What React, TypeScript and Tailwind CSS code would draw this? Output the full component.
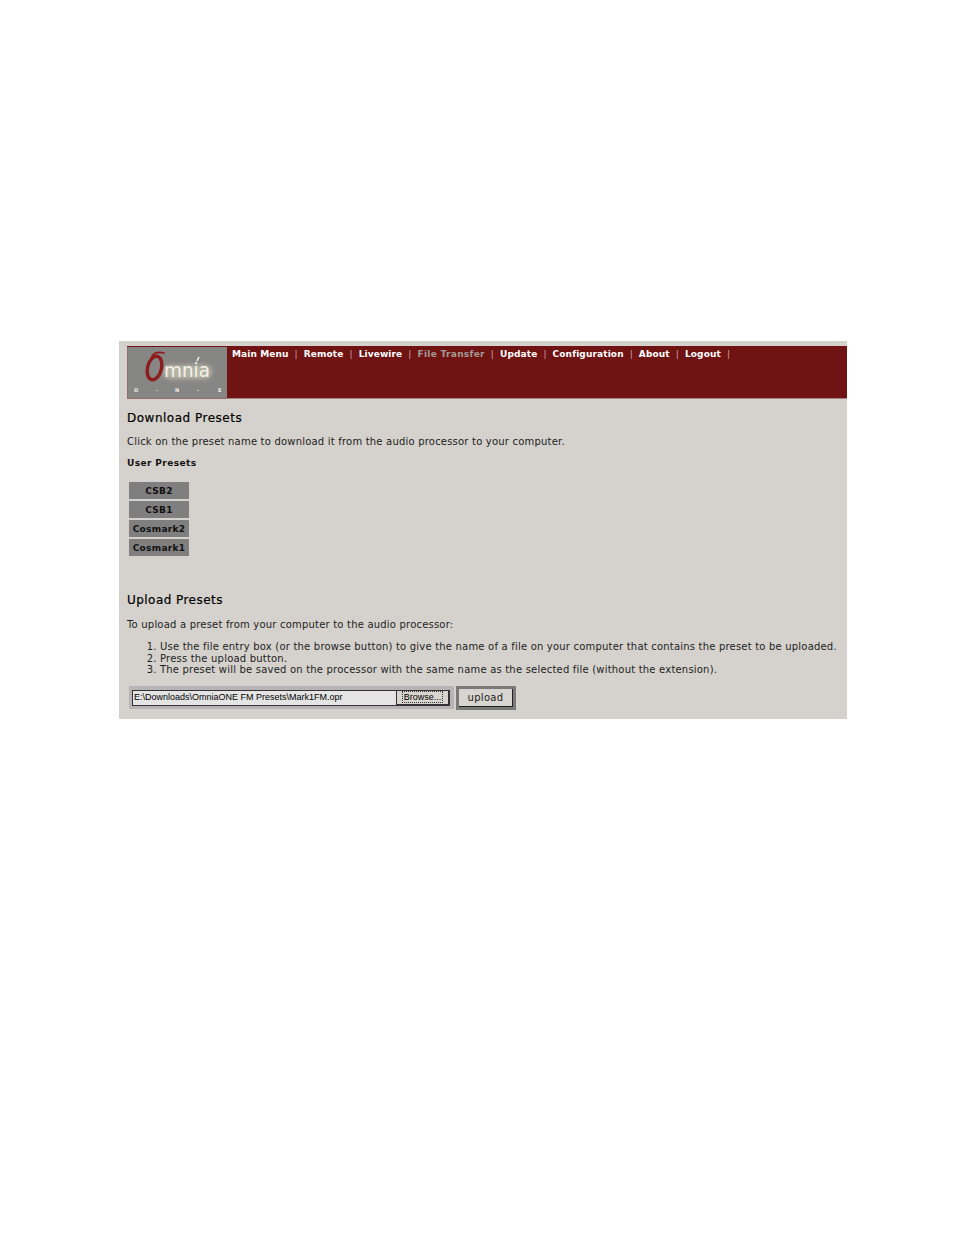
import React from 'react';

const navItems = ['Main Menu', 'Remote', 'Livewire', 'File Transfer', 'Update', 'Configuration', 'About', 'Logout'];
const presets = ['CSB2', 'CSB1', 'Cosmark2', 'Cosmark1'];
const steps = [
  'Use the file entry box (or the browse button) to give the name of a file on your computer that contains the preset to be uploaded.',
  'Press the upload button.',
  'The preset will be saved on the processor with the same name as the selected file (without the extension).',
];

const OmniaLogo = () => (
  <svg width="100" height="52" viewBox="0 0 100 52" className="block shrink-0">
    <defs>
      <filter id="glow" x="-30%" y="-30%" width="160%" height="160%">
        <feGaussianBlur stdDeviation="2.2" />
      </filter>
    </defs>
    <rect width="100" height="52" fill="#868684" />
    <rect x="0" y="0" width="1" height="52" fill="#9a6a6a" />
    <rect x="0" y="51" width="100" height="1" fill="#9a6a6a" />
    <rect x="36" y="18" width="49" height="14" rx="7" fill="#b5b3a6" filter="url(#glow)" />
    <ellipse cx="27.5" cy="21" rx="7" ry="12" transform="rotate(14 27.5 21)" fill="none" stroke="#8d1c1c" strokeWidth="3.4" />
    <path d="M25 9 C28 5 33 5 37 6" fill="none" stroke="#8d1c1c" strokeWidth="1.8" strokeLinecap="round" />
    <text x="37" y="30" fontFamily="'DejaVu Sans', sans-serif" fontSize="19" fill="#f4f2e8" textLength="46" lengthAdjust="spacingAndGlyphs">
      mnia
    </text>
    <path d="M70 14 L72 10" stroke="#f0f0f0" strokeWidth="1.6" />
    <text y="45" fontFamily="'DejaVu Sans', sans-serif" fontSize="5" fontWeight="700" fill="#f1efe6">
      <tspan x="7">O</tspan>
      <tspan x="29">-</tspan>
      <tspan x="48">N</tspan>
      <tspan x="70">-</tspan>
      <tspan x="91">E</tspan>
    </text>
  </svg>
);

export default function App() {
  return (
    <div className="min-h-[1235px] bg-white pl-[119px] pt-[341px] font-['DejaVu_Sans',sans-serif] text-black">
      <div className="h-[378px] w-[728px] bg-[#d5d2cd] pl-2 pt-[5px]">
        {/* Header */}
        <div className="flex h-[53px] items-start border-b border-[#a88585] border-t-[1px] border-t-[#701212] bg-[#701313]">
          <OmniaLogo />
          <div className="flex items-center pl-[5px] pt-[1px] text-[9px] font-bold leading-[12px] tracking-[0.12px] text-white">
            {navItems.map((item) => (
              <React.Fragment key={item}>
                <span className={item === 'File Transfer' ? 'tracking-[0.3px] text-[#a39a96]' : ''}>{item}</span>
                <span className="mx-[6px] font-normal text-[#c9a9a9]">|</span>
              </React.Fragment>
            ))}
          </div>
        </div>

        <h2 className="mt-[12px] text-[12px] font-normal leading-[14px] tracking-[0.5px] [-webkit-text-stroke:0.2px_black]">Download Presets</h2>
        <p className="mt-[11px] text-[10px] leading-[12px] tracking-[0.2px] text-[#222]">
          Click on the preset name to download it from the audio processor to your computer.
        </p>
        <p className="mt-[9px] text-[9px] font-bold leading-[12px] tracking-[0.4px] text-[#111]">User Presets</p>

        <div className="ml-[2px] mt-[13px] flex w-[60px] flex-col gap-[2px]">
          {presets.map((preset) => (
            <div
              key={preset}
              className="flex h-[17px] w-[60px] items-center justify-center bg-[#7f7f7f] pt-[2px] text-[9px] font-bold leading-none tracking-[0.3px] text-[#111]"
            >
              {preset}
            </div>
          ))}
        </div>

        <h2 className="mt-[37px] text-[12px] font-normal leading-[14px] tracking-[0.45px] [-webkit-text-stroke:0.2px_black]">Upload Presets</h2>
        <p className="mt-[12px] text-[10px] leading-[12px] tracking-[0.2px] text-[#222]">To upload a preset from your computer to the audio processor:</p>

        <ol className="ml-[33px] mt-[10px] list-decimal text-[10px] leading-[11.5px] tracking-[0.2px] text-[#222]">
          {steps.map((step) => (
            <li key={step}>{step}</li>
          ))}
        </ol>

        {/* Upload form */}
        <div className="ml-[2px] mt-[10px] flex items-center">
          <div className="flex h-[23px] w-[325px] items-center bg-[#b7b3b6] px-[3px]">
            <div className="flex h-[16px] w-[264px] items-center truncate border border-[#333] border-r-0 bg-[#e4e4e4] pl-[1px] pt-[1px] font-['Liberation_Sans',sans-serif] text-[9px] text-black">
              E:\Downloads\OmniaONE FM Presets\Mark1FM.opr
            </div>
            <div className="flex h-[16px] w-[54px] items-center justify-center border border-[#333] border-b-2 border-r-2 bg-[#d8d5d0] font-['Liberation_Sans',sans-serif] text-[9px] text-black">
              <span className="border border-dotted border-[#333] px-[1px] leading-[10px]">Browse...</span>
            </div>
          </div>
          <div className="ml-[2px] flex h-[24px] w-[60px] items-center justify-center bg-[#7a7a7a] p-[3px]">
            <div className="flex h-full w-full items-center justify-center border-b border-r border-[#222] bg-[#d8d5d0] pt-[2px] text-[10px] leading-none tracking-[0.3px] text-[#222]">
              upload
            </div>
          </div>
        </div>
      </div>
    </div>
  );
}
